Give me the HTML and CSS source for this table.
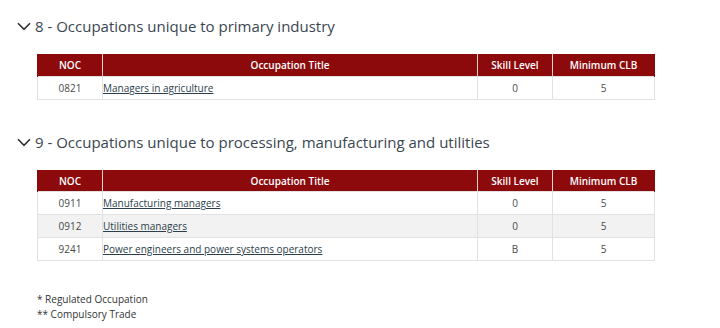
FILE: index.html
```html
<!DOCTYPE html>
<html>
<head>
<meta charset="utf-8">
<link rel="stylesheet" href="styles.css">
</head>
<body>
<div class="page">
  <section class="group">
    <h2 class="group-title"><svg class="chev" viewBox="0 0 14 9" width="14" height="9"><path d="M1 1.2 L7 7.4 L13 1.2" fill="none" stroke="#333" stroke-width="1.6"/></svg>8 - Occupations unique to primary industry</h2>
    <table class="noc">
      <colgroup><col class="c1"><col class="c2"><col class="c3"><col class="c4"></colgroup>
      <thead><tr><th>NOC</th><th>Occupation Title</th><th>Skill Level</th><th>Minimum CLB</th></tr></thead>
      <tbody>
        <tr><td>0821</td><td class="title"><a href="#">Managers in agriculture</a></td><td class="ctr">0</td><td class="ctr">5</td></tr>
      </tbody>
    </table>
  </section>
  <section class="group second">
    <h2 class="group-title"><svg class="chev" viewBox="0 0 14 9" width="14" height="9"><path d="M1 1.2 L7 7.4 L13 1.2" fill="none" stroke="#333" stroke-width="1.6"/></svg>9 - Occupations unique to processing, manufacturing and utilities</h2>
    <table class="noc">
      <colgroup><col class="c1"><col class="c2"><col class="c3"><col class="c4"></colgroup>
      <thead><tr><th>NOC</th><th>Occupation Title</th><th>Skill Level</th><th>Minimum CLB</th></tr></thead>
      <tbody>
        <tr><td>0911</td><td class="title"><a href="#">Manufacturing managers</a></td><td class="ctr">0</td><td class="ctr">5</td></tr>
        <tr class="alt"><td>0912</td><td class="title"><a href="#">Utilities managers</a></td><td class="ctr">0</td><td class="ctr">5</td></tr>
        <tr><td>9241</td><td class="title"><a href="#">Power engineers and power systems operators</a></td><td class="ctr">B</td><td class="ctr">5</td></tr>
      </tbody>
    </table>
  </section>
  <div class="notes">
    <div>* Regulated Occupation</div>
    <div>** Compulsory Trade</div>
  </div>
</div>
</body>
</html>
```
FILE: styles.css
```css
html, body { margin: 0; padding: 0; background: #fff; }
body { font-family: "Open Sans", "Noto Sans", sans-serif; color: #333; }
.page { padding: 15px 0 0 17px; width: 637px; }
.group-title {
  display: flex; align-items: center; gap: 4px;
  margin: 0; font-weight: 400; font-size: 15px; line-height: 22px;
  color: #3b4650; letter-spacing: 0;
}
.chev { flex: none; margin-top: 1px; }
.noc {
  margin: 17px 0 0 20px; width: 617px; border-collapse: collapse;
  table-layout: fixed; font-size: 10px;
}
.c1 { width: 65px; } .c2 { width: 375px; } .c3 { width: 75px; } .c4 { width: 102px; }
.noc th {
  background: #8c0a0b; color: #fff; font-weight: 600; height: 22px; padding: 0;
  text-align: center; border-left: 1px solid #e8d0d0; border-right: 1px solid #e8d0d0;
  font-size: 10px;
}
.noc th:first-child { border-left-color: #8c0a0b; }
.noc th:last-child { border-right-color: #8c0a0b; }
.second .noc th { height: 21px; }
.noc td {
  height: 22px; padding: 0; border: 1px solid #e2e2e2; text-align: center; color: #4a4a4a;
}
.noc td.title { text-align: left; padding-left: 0; }
.noc td.title a { color: #2c3e4c; text-decoration: underline; margin-left: 0; }
.noc tr.alt td { background: #f2f2f2; }
.second { margin-top: 31px; }
.notes { margin: 31px 0 0 20px; font-size: 10px; line-height: 15px; color: #333; }
```
